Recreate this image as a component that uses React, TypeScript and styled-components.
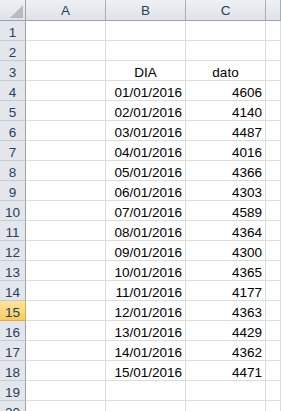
import React from "react"
import styled, { createGlobalStyle } from "styled-components"

const GlobalStyle = createGlobalStyle`
  html, body {
    margin: 0;
    padding: 0;
    background: #ffffff;
    overflow: hidden;
  }
`

const Sheet = styled.div`
  display: grid;
  grid-template-columns: 26px 80px 80px 80px 1fr;
  grid-auto-rows: 20px;
  grid-template-rows: 21px;
  width: 281px;
  height: 411px;
  overflow: hidden;
  font-family: "Liberation Sans", Arial, sans-serif;
  font-size: 13.5px;
`

const Corner = styled.div`
  position: relative;
  box-sizing: border-box;
  background: linear-gradient(#eef0f3, #dfe3e8);
  border-right: 1px solid #9ea3aa;
  border-bottom: 1px solid #9ea3aa;

  &::after {
    content: "";
    position: absolute;
    right: 2px;
    bottom: 2px;
    width: 0;
    height: 0;
    border-left: 13px solid transparent;
    border-bottom: 13px solid #b6bbc3;
  }
`

const ColHeader = styled.div`
  box-sizing: border-box;
  display: flex;
  align-items: center;
  justify-content: center;
  background: linear-gradient(#eef0f3, #dfe3e8);
  border-right: 1px solid #a9aeb5;
  border-bottom: 1px solid #9ea3aa;
  color: #27405e;
  line-height: 15px;
`

const RowHeader = styled.div<{ $active?: boolean }>`
  box-sizing: border-box;
  display: flex;
  align-items: flex-end;
  justify-content: center;
  background: ${(p) =>
    p.$active ? "linear-gradient(#fde49c, #f7cd5e)" : "#e3e6eb"};
  border-right: 1px solid ${(p) => (p.$active ? "#e5a83a" : "#9ea3aa")};
  border-bottom: 1px solid ${(p) => (p.$active ? "#e5a83a" : "#c6cbd2")};
  color: #27405e;
  line-height: 15px;
`

const Cell = styled.div<{ $align?: "left" | "center" | "right" }>`
  box-sizing: border-box;
  display: flex;
  align-items: flex-end;
  justify-content: ${(p) =>
    p.$align === "right" ? "flex-end" : p.$align === "center" ? "center" : "flex-start"};
  padding: 0 3px;
  border-right: 1px solid #dadcdd;
  border-bottom: 1px solid #dadcdd;
  color: #000000;
  line-height: 15px;
  white-space: nowrap;
`

const values = [
  4606, 4140, 4487, 4016, 4366, 4303, 4589, 4364, 4300, 4365, 4177, 4363,
  4429, 4362, 4471,
]

type Row = { b?: string; c?: string; header?: boolean }

const rows: Row[] = [
  {},
  {},
  { b: "DIA", c: "dato", header: true },
  ...values.map((v, i) => ({
    b: `${String(i + 1).padStart(2, "0")}/01/2016`,
    c: String(v),
  })),
  {},
  {},
  {},
]

export default function App(): JSX.Element {
  return (
    <>
      <GlobalStyle />
      <Sheet>
        <Corner />
        {["A", "B", "C", ""].map((col, i) => (
          <ColHeader key={i}>{col}</ColHeader>
        ))}
        {rows.map((row, index) => {
          const n = index + 1
          return (
            <React.Fragment key={n}>
              <RowHeader $active={n === 15}>{n}</RowHeader>
              <Cell />
              <Cell $align={row.header ? "center" : "right"}>{row.b}</Cell>
              <Cell $align={row.header ? "center" : "right"}>{row.c}</Cell>
              <Cell />
            </React.Fragment>
          )
        })}
      </Sheet>
    </>
  )
}
